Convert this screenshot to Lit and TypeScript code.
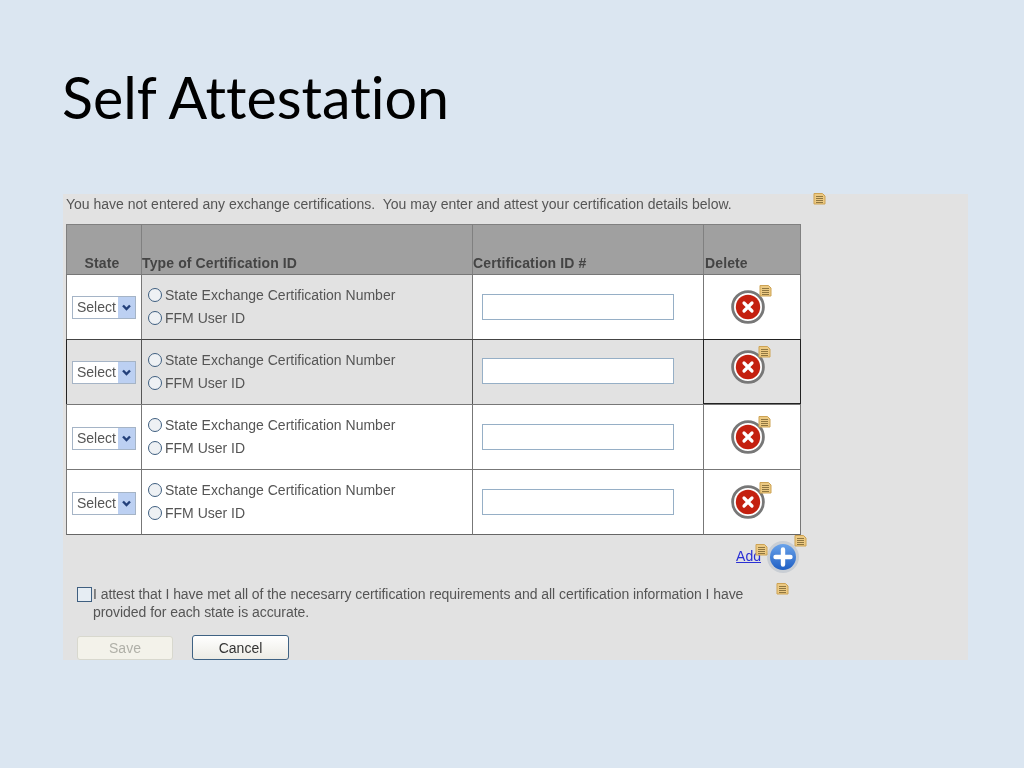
import { LitElement, html, css, svg } from "lit";
import { customElement } from "lit/decorators.js";

const note = (x: number, y: number) => html`<svg class="note" style="left:${x}px;top:${y}px" width="13" height="13" viewBox="0 0 13 13">
  <path d="M1 1.5H9.5L12 4V12H1Z" fill="#ecc982" stroke="#cda355" stroke-width="1"/>
  <path d="M3 4.5H10M3 6.5H10M3 8.5H10M3 10.5H10" stroke="#8f7640" stroke-width="1"/>
</svg>`;

const del = html`<svg class="del" width="34" height="34" viewBox="0 0 34 34">
  <circle cx="17" cy="17" r="15.4" fill="#fff" stroke="#777" stroke-width="2.8"/>
  <circle cx="17" cy="17" r="12.2" fill="#c4200f"/>
  <path d="M13 13L21 21M21 13L13 21" stroke="#fff" stroke-width="3.2" stroke-linecap="round"/>
</svg>`;

const plus = svg`<defs><linearGradient id="pg" x1="0" y1="0" x2="0" y2="1"><stop offset="0" stop-color="#6aa3ea"/><stop offset="1" stop-color="#1f5fc4"/></linearGradient></defs>
  <circle cx="17" cy="17" r="16" fill="#c9ced4"/>
  <circle cx="17" cy="17" r="13" fill="url(#pg)"/>
  <path d="M17 9.5V24.5M9.5 17H24.5" stroke="#fff" stroke-width="4.4" stroke-linecap="round"/>`;

@customElement("app-root")
export class AppRoot extends LitElement {
  static styles = css`
    :host { display: block; width: 1024px; height: 768px; background: #dbe6f1; overflow: hidden; font-family: "Liberation Sans", Arial, sans-serif; }
    .slide { display: flex; flex-direction: column; padding: 61px 56px 0 63px; }
    h1 { margin: 0 0 62px -1px; font: 400 57.3px/71px "Lato", "Open Sans", sans-serif; font-variant-ligatures: none; color: #000; height: 71px; }
    .panel { position: relative; height: 466px; background: #e2e2e2; padding: 0 3px; box-sizing: border-box; color: #555; font-size: 14px; filter: blur(0.3px); }
    .intro { height: 30px; line-height: 20px; white-space: pre; }
    .table { display: grid; grid-template-columns: 75px 331px 231px 98px; width: 735px; grid-template-rows: 50px 65px 65px 65px 66px; box-sizing: border-box; }
    .th { background: #a0a0a0; color: #444; font-weight: 700; letter-spacing: 0.12px; display: flex; align-items: flex-end; padding: 0 0 2px 0; border-top: 1px solid #808080; border-left: 1px solid #808080; box-sizing: border-box; line-height: 18px; }
    .th.state { justify-content: center; padding-right: 4px; }
    .th.del-h { border-right: 1px solid #808080; padding-left: 1px; }
    .c { box-sizing: border-box; border-left: 1px solid #777; border-top: 1px solid #777; display: flex; align-items: center; background: #fff; }
    .c.last { border-right: 1px solid #777; }
    .c.bottom { border-bottom: 1px solid #666; }
    .c.gray { background: #e2e2e2; }
    .c.dk { border-left-color: #555; border-top-color: #444; }
    .c.first.dk { border-left-color: #222; }
    .c.dk2 { border: 1px solid #222; }
    .c.low { padding-top: 2px; }
    .sel { margin-left: 5px; width: 64px; height: 23px; box-sizing: border-box; border: 1px solid #a5b4c6; background: #fff; display: flex; align-items: center; justify-content: space-between; padding-left: 4px; color: #555; overflow: hidden; }
    .sel i { width: 17px; height: 21px; background: #bcd0f2; display: flex; align-items: center; justify-content: center; flex: none; }
    .opts { display: flex; flex-direction: column; gap: 5px; padding-left: 5px; margin-top: -2px; }
    .opts label { display: flex; align-items: center; height: 18px; line-height: 18px; }
    input[type="radio"] { appearance: none; width: 14px; height: 14px; margin: 0 3px 0 1px; border: 1.3px solid #3f5f80; border-radius: 50%; background: #eef1f4; box-sizing: border-box; }
    input[type="text"] { width: 192px; height: 26px; box-sizing: border-box; border: 1px solid #96afc6; background: #fff; margin: -2px 0 0 9px; padding: 0; display: block; }
    .dc { justify-content: center; padding-right: 9px; }
    .del { display: block; }
    .c.high .del { margin-top: -10px; }
    .add { display: flex; justify-content: flex-end; align-items: center; height: 41px; width: 735px; padding-right: 40px; box-sizing: border-box; }
    .add a { color: #2a2fd4; text-decoration: underline; line-height: 16px; }
    .plus { position: absolute; left: 703px; top: 346px; }
    .attest { display: flex; padding-left: 11px; width: 690px; box-sizing: border-box; line-height: 18px; height: 50px; align-items: flex-start; margin-top: 9px; letter-spacing: -0.05px; }
    .attest input { appearance: none; flex: none; width: 15px; height: 15px; margin: 2px 1px 0 0; border: 1.5px solid #3f5f80; background: #e6edf3; box-sizing: border-box; }
    .btns { display: flex; align-items: flex-end; gap: 19px; padding-left: 11px; }
    .btn { font: inherit; height: 25px; width: 97px; box-sizing: border-box; border-radius: 3px; padding: 0; }
    .save { width: 96px; height: 24px; border: 1px solid #d8d8ce; background: #f3f2ea; color: #b0b0a8; }
    .cancel { border: 1.5px solid #3f6283; background: linear-gradient(#fff, #ecebe4); color: #333; }
    .note { position: absolute; display: block; }
  `;

  render() {
    const rows = [
      { s: false, t: true, x: false, dk: false },
      { s: true, t: true, x: true, dk: true },
      { s: false, t: false, x: false, dk: false },
      { s: false, t: false, x: false, dk: false },
    ];
    return html`<div class="slide">
      <h1>Self Attestation</h1>
      <div class="panel">
        <div class="intro">You have not entered any exchange certifications.  You may enter and attest your certification details below.</div>
        <div class="table">
          <div class="th state">State</div>
          <div class="th">Type of Certification ID</div>
          <div class="th">Certification ID #</div>
          <div class="th del-h">Delete</div>
          ${rows.map((r, i) => {
            const b = i === 3 ? "bottom" : "";
            const low = i >= 2 ? "low" : "";
            return html`
              <div class="c first ${b} ${low} ${r.s ? "gray" : ""} ${r.dk ? "dk" : ""}"><div class="sel">Select<i><svg width="11" height="9" viewBox="0 0 11 9"><path d="M2 2.5L5.5 6L9 2.5" fill="none" stroke="#23407a" stroke-width="2.4"/></svg></i></div></div>
              <div class="c ${b} ${r.t ? "gray" : ""} ${r.dk ? "dk" : ""}"><div class="opts">
                <label><input type="radio" name="r${i}" />State Exchange Certification Number</label>
                <label><input type="radio" name="r${i}" />FFM User ID</label>
              </div></div>
              <div class="c ${b} ${r.x ? "gray" : ""} ${r.dk ? "dk" : "low"}"><input type="text" /></div>
              <div class="c dc last ${b} ${r.x ? "gray" : ""} ${r.dk ? "dk2 high" : ""}">${del}</div>`;
          })}
        </div>
        <div class="add"><a href="#">Add</a></div>
        <svg class="plus" width="34" height="34" viewBox="0 0 34 34">${plus}</svg>
        <div class="attest"><input type="checkbox" /><span>I attest that I have met all of the necesarry certification requirements and all certification information I have provided for each state is accurate.</span></div>
        <div class="btns"><button class="btn save">Save</button><button class="btn cancel">Cancel</button></div>
        ${note(750, -2)}${note(696, 90)}${note(695, 151)}${note(695, 221)}${note(696, 287)}${note(692, 349)}${note(731, 340)}${note(713, 388)}
      </div>
    </div>`;
  }
}
